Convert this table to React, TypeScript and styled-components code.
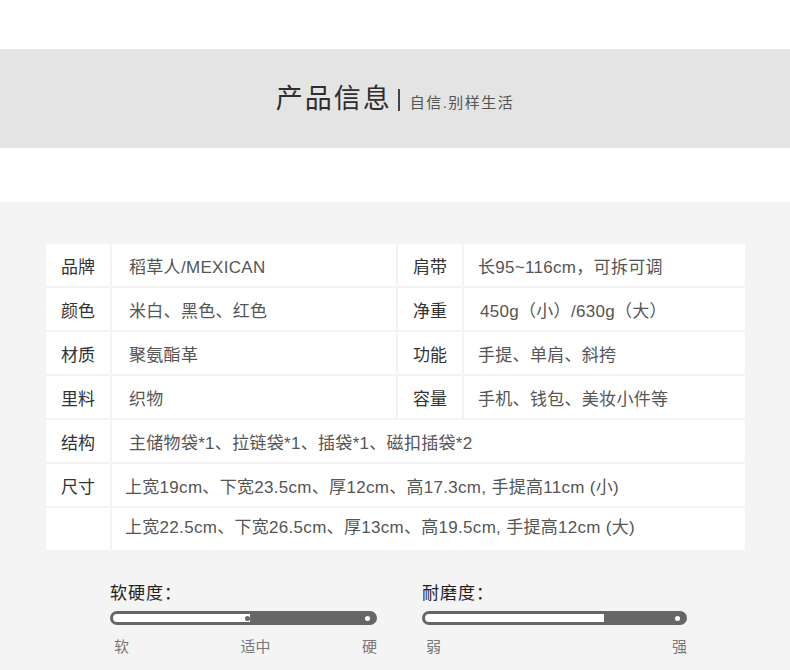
import styled, { createGlobalStyle } from "styled-components";

const GlobalStyle = createGlobalStyle`
    html, body {
        margin: 0;
        padding: 0;
        background: #f4f4f4;
    }
    body {
        font-family: "Liberation Sans", "Noto Sans CJK SC", sans-serif;
    }
`

const Page = styled.div`
    width: 790px;
    min-height: 670px;
    background: #f4f4f4;
`

const TopSpace = styled.div`
    height: ${(p: { $h: number }) => p.$h}px;
    background: #fff;
`

const Banner = styled.div`
    height: 99px;
    background: #e4e4e4;
    display: flex;
    align-items: center;
    justify-content: center;
    padding-top: 1px;
    box-sizing: border-box;
`

const Title = styled.h2`
    margin: 0;
    font-size: 27px;
    font-weight: 400;
    letter-spacing: 2px;
    color: #2e2e2e;
    line-height: 1;
`

const Divider = styled.span`
    display: inline-block;
    width: 2px;
    height: 22px;
    background: #444;
    margin: 0 10px 0 6px;
    position: relative;
    top: 1px;
`

const Slogan = styled.span`
    font-size: 15px;
    color: #555;
    letter-spacing: 1.5px;
    position: relative;
    top: 2px;
`

const Content = styled.section`
    padding: 42px 45px 0 46px;
`

const Table = styled.div`
    display: grid;
    grid-template-columns: 64px 284px 64px 1fr;
    grid-auto-rows: 42px;
    gap: 2px;
`

const Label = styled.div`
    background: #fff;
    display: flex;
    align-items: center;
    justify-content: center;
    font-size: 17px;
    color: #333;
`

const Value = styled.div<{ $pad?: number; $span?: number; $shift?: number }>`
    background: #fff;
    display: flex;
    align-items: center;
    padding-left: ${(p) => p.$pad ?? 17}px;
    padding-bottom: ${(p) => p.$shift ?? 0}px;
    grid-column: span ${(p) => p.$span ?? 1};
    font-size: 17px;
    letter-spacing: 0.3px;
    color: #555;
    white-space: pre;
`

const Ratings = styled.div`
    display: flex;
    padding: 32px 0 0 64px;
    gap: 45px;
`

const Rating = styled.div<{ $w: number }>`
    width: ${(p) => p.$w}px;
`

const RatingTitle = styled.div`
    font-size: 17px;
    color: #222;
    height: 26px;
    line-height: 24px;
    letter-spacing: 1px;
`

const Bar = styled.div`
    position: relative;
    margin-top: 3px;
    height: 14px;
    border-radius: 7px;
    background: #666;
    padding: 3px;
    box-sizing: border-box;
`

const Fill = styled.div`
    height: 8px;
    background: #fff;
    border-radius: 4px 0 0 4px;
`

const Dot = styled.span<{ $light?: boolean }>`
    position: absolute;
    top: 50%;
    width: 5px;
    height: 5px;
    margin: -2.5px 0 0 -2.5px;
    border-radius: 50%;
    background: ${(p) => (p.$light ? "#fff" : "#666")};
`

const Scale = styled.div`
    display: flex;
    justify-content: space-between;
    padding: 10px 0 0 4px;
    font-size: 15px;
    color: #777;
`

const Mid = styled.span`
    margin-left: 20px;
`

type RatingProps = {
    title: string;
    width: number;
    fill: number;
    dots: { at: number; light?: boolean }[];
    labels: string[];
}

const RatingBar = ({ title, width, fill, dots, labels }: RatingProps) => (
    <Rating $w={width}>
        <RatingTitle>{title}</RatingTitle>
        <Bar>
            <Fill style={{ width: fill }} />
            {dots.map((d, i) => (
                <Dot key={i} $light={d.light} style={{ left: d.at }} />
            ))}
        </Bar>
        <Scale>
            {labels.map((l, i) =>
                i === 1 && labels.length === 3 ? <Mid key={i}>{l}</Mid> : <span key={i}>{l}</span>
            )}
        </Scale>
    </Rating>
)

export default function App() {
    return (
        <Page>
            <GlobalStyle />
            <TopSpace $h={49} />
            <Banner>
                <Title>产品信息</Title>
                <Divider />
                <Slogan>自信.别样生活</Slogan>
            </Banner>
            <TopSpace $h={54} />
            <Content>
                <Table>
                    <Label>品牌</Label>
                    <Value>稻草人/MEXICAN</Value>
                    <Label>肩带</Label>
                    <Value $pad={14}>长95~116cm，可拆可调</Value>

                    <Label>颜色</Label>
                    <Value>米白、黑色、红色</Value>
                    <Label>净重</Label>
                    <Value $pad={16}>450g（小）/630g（大）</Value>

                    <Label>材质</Label>
                    <Value>聚氨酯革</Value>
                    <Label>功能</Label>
                    <Value $pad={14}>手提、单肩、斜挎</Value>

                    <Label>里料</Label>
                    <Value>织物</Value>
                    <Label>容量</Label>
                    <Value $pad={14}>手机、钱包、美妆小件等</Value>

                    <Label>结构</Label>
                    <Value $span={3}>主储物袋*1、拉链袋*1、插袋*1、磁扣插袋*2</Value>

                    <Label>尺寸</Label>
                    <Value $span={3} $pad={13}>上宽19cm、下宽23.5cm、厚12cm、高17.3cm, 手提高11cm (小)</Value>

                    <Label />
                    <Value $span={3} $pad={13} $shift={8}>上宽22.5cm、下宽26.5cm、厚13cm、高19.5cm, 手提高12cm (大)</Value>
                </Table>
                <Ratings>
                    <RatingBar
                        title="软硬度："
                        width={267}
                        fill={137}
                        dots={[{ at: 137 }, { at: 257, light: true }]}
                        labels={["软", "适中", "硬"]}
                    />
                    <RatingBar
                        title="耐磨度："
                        width={265}
                        fill={179}
                        dots={[{ at: 255, light: true }]}
                        labels={["弱", "强"]}
                    />
                </Ratings>
            </Content>
        </Page>
    )
}
